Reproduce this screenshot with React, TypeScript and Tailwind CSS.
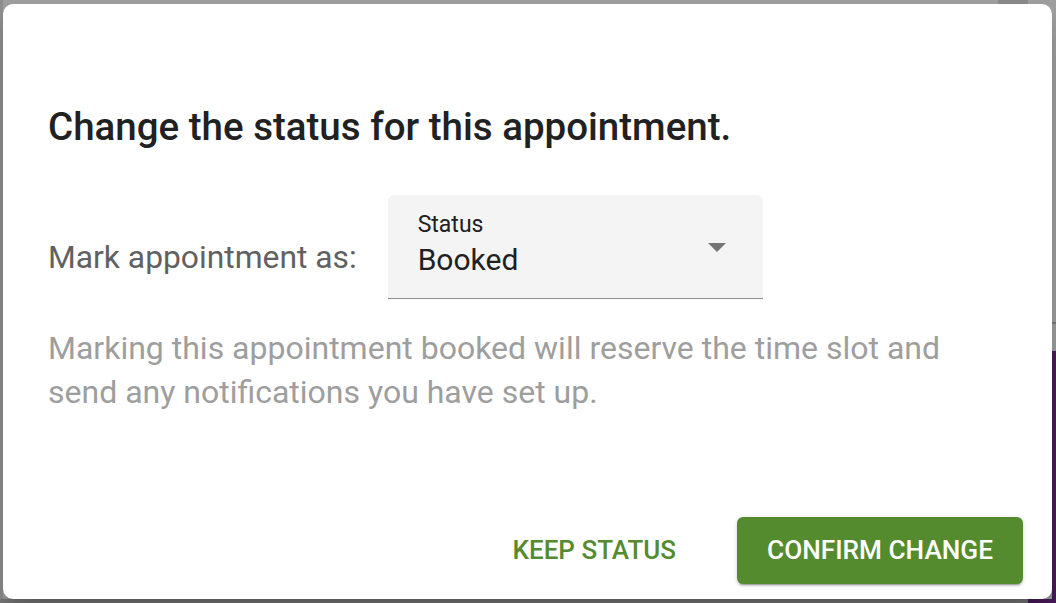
export default function App() {
  return (
    <div className="relative w-[1056px] h-[603px] overflow-hidden bg-[#9f9f9f] font-['Roboto',sans-serif]">
      {/* dimmed page bits behind the backdrop */}
      <div className="absolute left-0 top-0 w-[3px] h-[603px] bg-[#8f8f8f]" />
      <div className="absolute left-[998px] top-0 w-[30px] h-[4px] bg-[#8a8a8a]" />
      <div className="absolute right-0 top-[322px] w-[4px] h-[2px] bg-[#7c7c7c]" />
      <div className="absolute right-0 top-[351px] w-[4px] h-[252px] bg-[#4a1b5b]" />
      <div className="absolute left-0 bottom-0 w-[1028px] h-[4px] bg-[#7a7a7a]" />
      <div className="absolute left-[1028px] bottom-0 w-[28px] h-[4px] bg-[#4a1b5b]" />

      <div className="relative ml-[3px] mt-[4px] w-[1049px] h-[595px] flex flex-col bg-white rounded-[10px] shadow-[0_11px_15px_-7px_rgba(0,0,0,0.2),0_24px_38px_3px_rgba(0,0,0,0.14)]">
        <div className="pt-[100px] px-[45px]">
          <h2 className="text-[38.5px] leading-[46px] font-medium text-[#212121]">
            Change the status for this appointment.
          </h2>

          <div className="mt-[45px] flex items-start">
            <span className="mt-[43px] text-[31.8px] leading-[38px] text-[#616161]">Mark appointment as:</span>
            <div className="relative ml-[31px] w-[375px] h-[104px] pt-[16px] px-[30px] bg-[#f4f4f4] rounded-t-[6px] border-b border-[#8c8c8c]">
              <div className="text-[23px] leading-[28px] text-[#212121]">Status</div>
              <div className="mt-[3px] text-[30px] leading-[36px] text-[#212121]">Booked</div>
              <svg className="absolute right-[37px] top-[48px]" width="18" height="9" viewBox="0 0 18 9">
                <path d="M0 0h18L9 9z" fill="#757575" />
              </svg>
            </div>
          </div>

          <p className="mt-[27px] text-[32px] leading-[44px] text-[#9e9e9e]">
            Marking this appointment booked will reserve the time slot and send any notifications you have set up.
          </p>
        </div>

        <div className="mt-auto flex items-center justify-end gap-[38px] pr-[29px] pb-[15px]">
          <button className="h-[67px] px-[23px] rounded-[6px] text-[26px] font-medium uppercase text-[#558b2f]">
            Keep status
          </button>
          <button className="h-[67px] px-[30px] rounded-[6px] bg-[#558b2f] text-[26.2px] font-medium uppercase text-white shadow-[0_3px_1px_-2px_rgba(0,0,0,0.2),0_2px_2px_0_rgba(0,0,0,0.14),0_1px_5px_0_rgba(0,0,0,0.12)]">
            Confirm change
          </button>
        </div>
      </div>
    </div>
  )
}
